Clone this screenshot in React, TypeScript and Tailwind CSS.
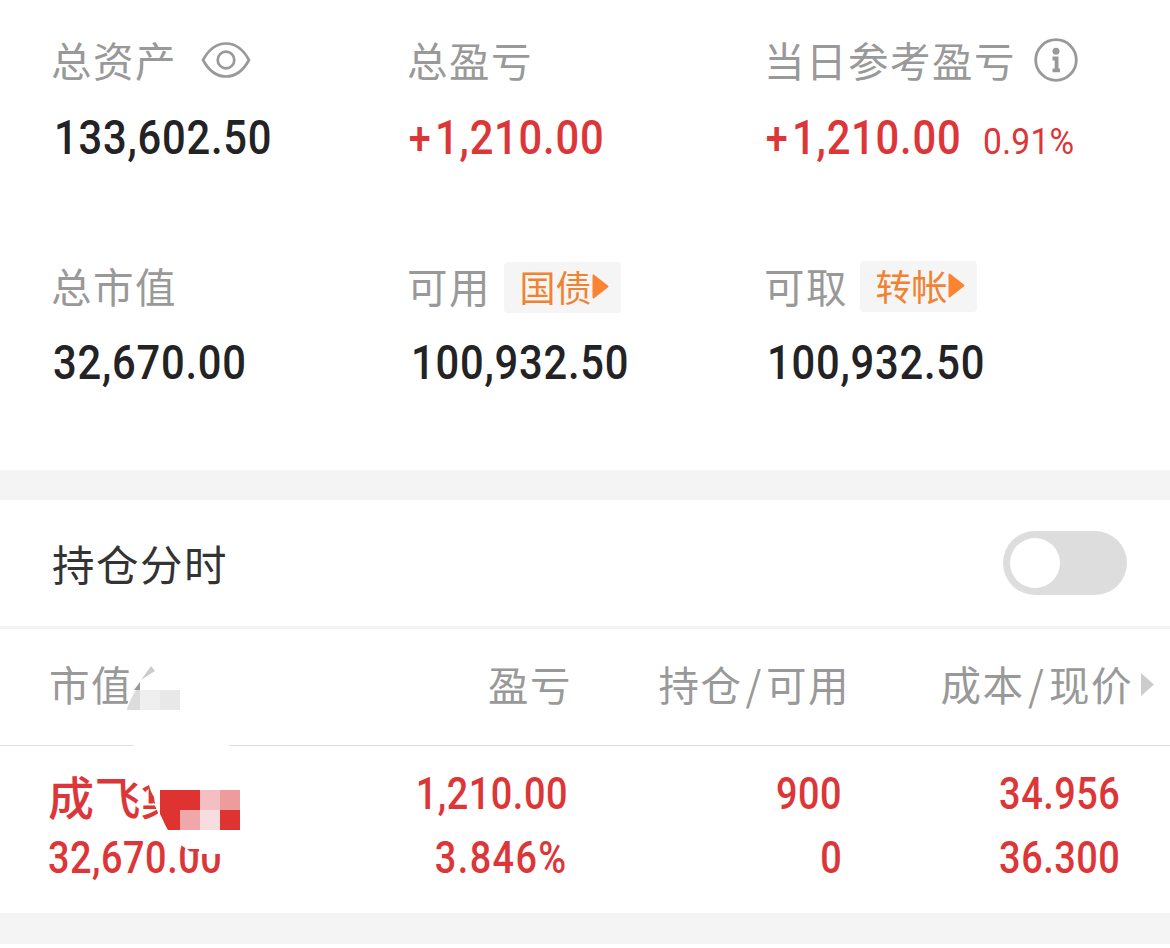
import React from "react";

type NumProps = {
  children: React.ReactNode;
  className?: string;
  align?: "left" | "right";
};

type HoldingCellProps = {
  top: string;
  bottom: React.ReactNode;
};

// Figures are set slightly condensed
const Num: React.FC<NumProps> = ({ children, className = "", align = "left" }) => (
  <span
    className={`inline-block whitespace-nowrap font-['Roboto',sans-serif] font-medium ${
      align === "left" ? "origin-left" : "origin-right"
    } ${className}`}
  >
    {children}
  </span>
);

const Label: React.FC<{ children: React.ReactNode }> = ({ children }) => (
  <span className="-ml-px whitespace-nowrap pb-[2px] text-[40.5px] tracking-[1.5px] text-[#999999]">
    {children}
  </span>
);

const BigNum: React.FC<{ children: React.ReactNode; red?: boolean }> = ({ children, red }) => (
  <Num
    className={`scale-x-[0.86] pt-0.5 text-[48.5px] tracking-[0.9px] ${
      red ? "text-[#dc3638]" : "text-[#232325]"
    }`}
  >
    {children}
  </Num>
);

const Plus = () => <span className="ml-px mr-[4px] text-[46px]">+</span>;

const Tag: React.FC<{ children: React.ReactNode }> = ({ children }) => (
  <button className="flex h-[51px] w-[117px] items-center rounded-[4px] bg-[#f5f5f5] pl-[15px] text-[36px] text-[#f08332]">
    <span className="w-[73px] whitespace-nowrap pb-[3px]">{children}</span>
    <svg className="mb-0.5 h-[25px] w-[17px]" viewBox="0 0 17 25">
      <path d="M1.5 1.5 15.5 12.5 1.5 23.5z" fill="#fa8432" stroke="#fa8432" strokeWidth="2" strokeLinejoin="round" />
    </svg>
  </button>
);

const EyeIcon = () => (
  <svg className="mb-[3px] h-[38px] w-[50px]" viewBox="0 0 50 38" fill="none" stroke="#999" strokeWidth="2.7">
    <path d="M2 19C8 8 16 2.500 25 2.500S42 8 48 19C42 30 34 35.500 25 35.500S8 30 2 19Z" strokeLinejoin="round" />
    <circle cx="25" cy="19" r="8.3" />
  </svg>
);

const InfoIcon = () => (
  <svg className="mb-[3px] h-[44px] w-[44px]" viewBox="0 0 44 44" fill="none" stroke="#999">
    <circle cx="22" cy="22" r="20.3" strokeWidth="2.8" />
    <circle cx="22" cy="13.2" r="3.5" fill="#999" stroke="none" />
    <path d="M18.500 20.500H22.600V32M18.500 32.300H26" strokeWidth="3.8" />
  </svg>
);

const HoldingCell: React.FC<HoldingCellProps> = ({ top, bottom }) => (
  <div className="flex flex-col items-end text-[43.5px] leading-[64px] text-[#dc3638]">
    <Num align="right" className="scale-x-[0.87] tracking-[0.6px]">{top}</Num>
    <Num align="right" className="scale-x-[0.87] tracking-[0.6px]">{bottom}</Num>
  </div>
);

const Summary = () => (
  <section className="grid h-[470px] grid-cols-[356px_357px_1fr] grid-rows-[226px_1fr] pl-[52px] pt-[31px]">
    <div>
      <div className="flex h-[60px] items-center">
        <Label>总资产</Label>
        <span className="ml-[24px]"><EyeIcon /></span>
      </div>
      <div className="mt-4 flex h-[60px] items-center pl-0.5"><BigNum>133,602.50</BigNum></div>
    </div>
    <div>
      <div className="flex h-[60px] items-center"><Label>总盈亏</Label></div>
      <div className="mt-4 flex h-[60px] items-center"><BigNum red><Plus />1,210.00</BigNum></div>
    </div>
    <div>
      <div className="flex h-[60px] items-center">
        <Label>当日参考盈亏</Label>
        <span className="ml-[18px]"><InfoIcon /></span>
      </div>
      <div className="mt-4 flex h-[60px] items-center">
        <span className="w-[218px]"><BigNum red><Plus />1,210.00</BigNum></span>
        <Num className="mt-[10px] scale-x-[0.92] text-[36.5px] !font-normal tracking-[0.3px] text-[#dc3638]">0.91%</Num>
      </div>
    </div>
    <div>
      <div className="flex h-[60px] items-center"><Label>总市值</Label></div>
      <div className="mt-[15px] flex h-[60px] items-center pl-px"><BigNum>32,670.00</BigNum></div>
    </div>
    <div>
      <div className="flex h-[60px] items-center">
        <Label>可用</Label>
        <span className="ml-[13px]"><Tag>国债</Tag></span>
      </div>
      <div className="mt-[15px] flex h-[60px] items-center pl-[3px]"><BigNum>100,932.50</BigNum></div>
    </div>
    <div>
      <div className="flex h-[60px] items-center">
        <Label>可取</Label>
        <span className="mb-px ml-3"><Tag>转帐</Tag></span>
      </div>
      <div className="mt-[15px] flex h-[60px] items-center pl-0.5"><BigNum>100,932.50</BigNum></div>
    </div>
  </section>
);

// Mosaic covering the end of the first column header
const HeaderMosaic = () => (
  <svg className="absolute left-[125px] top-[20px] h-[62px] w-[62px]" viewBox="125 649 62 62">
    <path d="M132 690 155 660H187V711H125z" fill="#fff" />
    <path d="M126.500 710C129 703 132 696 136 690H140V710z" fill="#dcdcdc" />
    <path d="M134 690 140 682V690z" fill="#999" />
    <path d="M141 680 151 666 155 671z" fill="#ccc" />
    <path d="M140 690h20v20h-20z" fill="#efefef" />
    <path d="M160 690h20v20h-20z" fill="#e8e8e8" />
  </svg>
);

// Mosaic covering the rest of the stock name and the top of the last digits
const NameMosaic = () => (
  <svg className="absolute left-[138px] top-[20px] h-[100px] w-[120px]" viewBox="138 766 120 100">
    <path d="M143 766H258V854H201L199 851 188 850 181 845 182 830H168L160 818 154 803 149 785 143 788z" fill="#fff" />
    <path d="M149 788 154 797 155 804 150 801z" fill="#dc3638" />
    <path d="M160 790h40v40h-32c-2-3-4-8-8-16z" fill="#df3331" />
    <path d="M200 790h20v20h-20z" fill="#f3bfc2" />
    <path d="M220 790h20v20h-20z" fill="#ed9b9d" />
    <path d="M180 810h20v20h-20z" fill="#f0a7aa" />
    <path d="M200 810h20v20h-20z" fill="#f8dddf" />
    <path d="M220 810h20v20h-20z" fill="#df3331" />
    <path d="M187 849H199V851.500H190z" fill="#dc3638" />
  </svg>
);

const Holdings = () => (
  <section>
    <div className="flex h-[116px] items-center pb-[5px] text-[40.5px] tracking-[1.5px] text-[#999999]">
      <div className="relative flex h-[111px] w-[290px] items-center pl-[49px]">
        市值
        <HeaderMosaic />
      </div>
      <div className="w-[282px] text-right">盈亏</div>
      <div className="w-[278px] whitespace-nowrap text-right">
        持仓<span className="mx-[3px]">/</span>可用
      </div>
      <div className="w-[283px] whitespace-nowrap text-right">
        成本<span className="mx-[3.5px]">/</span>现价
      </div>
      <svg className="ml-[8px] h-[25px] w-[13px]" viewBox="0 0 13 25">
        <path d="M0 1 13 12.500 0 24z" fill="#ccc" />
      </svg>
    </div>
    <div className="flex h-px">
      <div className="w-[134px] bg-[#e3e3e3]" />
      <div className="w-[95px]" />
      <div className="flex-1 bg-[#dedede]" />
    </div>
    <div className="flex h-[167px] pt-[17px]">
      <div className="relative -mt-[17px] h-[167px] w-[290px] pl-[48px] pt-[17px] text-[#dc3638]">
        <div className="h-[64px] whitespace-nowrap text-[46px] font-medium leading-[64px] tracking-[0.5px]">成飞集</div>
        <Num className="scale-x-[0.87] text-[43.5px] leading-[64px] tracking-[0.6px]">32,670.00</Num>
        <NameMosaic />
      </div>
      <div className="w-[278px]">
        <HoldingCell top="1,210.00" bottom={<span className="tracking-[1.6px]">3.846%</span>} />
      </div>
      <div className="w-[274px]"><HoldingCell top="900" bottom="0" /></div>
      <div className="w-[278px]"><HoldingCell top="34.956" bottom="36.300" /></div>
    </div>
  </section>
);

export default function App() {
  return (
    <div className="h-[948px] w-[1170px] overflow-hidden bg-white font-['Noto_Sans_CJK_SC',sans-serif]">
      <Summary />
      <div className="h-[30px] bg-[#f4f4f4]" />
      <div className="flex h-[126px] items-center justify-between pl-[52px] pr-[43px]">
        <span className="text-[42.5px] tracking-[1.5px] text-[#333333]">持仓分时</span>
        <button role="switch" aria-checked="false" className="h-[64px] w-[124px] rounded-full bg-[#dddddd] p-[7px]">
          <span className="block h-[50px] w-[50px] rounded-full bg-white" />
        </button>
      </div>
      <div className="h-[3px] bg-[#f3f3f3]" />
      <Holdings />
      <div className="h-[31px] bg-[#f4f4f4]" />
    </div>
  );
}
